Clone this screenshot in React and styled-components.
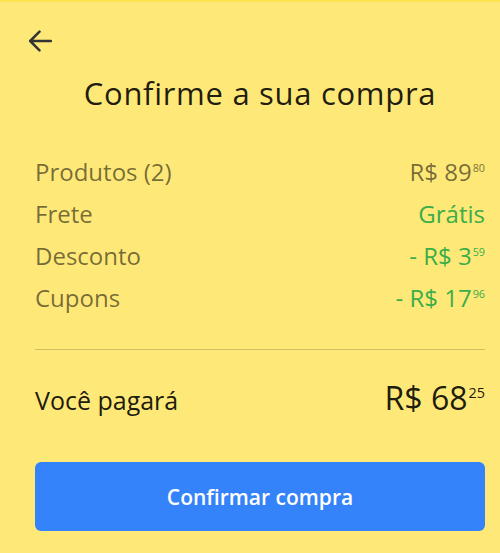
import React from "react";
import styled, { createGlobalStyle } from "styled-components";

const GlobalStyle = createGlobalStyle`
  html, body {
    margin: 0;
    padding: 0;
    background: #fee877;
  }
  body {
    font-family: "Open Sans", "Noto Sans", sans-serif;
  }
`;

const Page = styled.div`
  width: 500px;
  height: 553px;
  box-sizing: border-box;
  background: #fee877;
  border-top: 2px solid #fde24f;
  padding: 0 15px 0 35px;
  display: flex;
  flex-direction: column;
`;

const TopBar = styled.div`
  height: 73px;
  box-sizing: border-box;
  padding-top: 27px;
  margin-left: -7px;
  display: flex;
  align-items: flex-start;
`;

const BackButton = styled.button`
  background: none;
  border: none;
  padding: 0;
  width: 24px;
  height: 24px;
  display: flex;
  cursor: pointer;
`;

const Title = styled.h1`
  margin: 0;
  text-align: center;
  font-size: 31px;
  font-weight: 400;
  color: rgba(0, 0, 0, 0.88);
  letter-spacing: 0.7px;
  line-height: 36px;
`;

const Summary = styled.div`
  margin-top: 45px;
  display: flex;
  flex-direction: column;
  gap: 10px;
`;

const Row = styled.div`
  display: flex;
  justify-content: space-between;
  align-items: baseline;
  line-height: ${(p) => (p.$strong ? "36px" : "32px")};
  font-size: ${(p) => (p.$strong ? "25px" : "24px")};
  color: ${(p) => (p.$strong ? "rgba(0, 0, 0, 0.9)" : "rgba(0, 0, 0, 0.55)")};
`;

const Value = styled.span`
  color: ${(p) => (p.$green ? "#3aae48" : "inherit")};
  font-size: ${(p) => (p.$big ? "32px" : "24px")};
`;

const Cents = styled.sup`
  font-size: 0.45em;
  line-height: 0;
  vertical-align: 0.85em;
  margin-left: 1px;
`;

const Divider = styled.hr`
  border: none;
  border-top: 1px solid rgba(0, 0, 0, 0.18);
  margin: 35px 0 0;
`;

const Total = styled(Row)`
  margin-top: 30px;
`;

const ConfirmButton = styled.button`
  margin-top: 44px;
  height: 69px;
  border: none;
  border-radius: 6px;
  background: #3483fa;
  color: #fff;
  font-family: inherit;
  font-size: 21px;
  font-weight: 600;
  cursor: pointer;
`;

const Price = ({ int, cents, green, big, minus }) => (
  <Value $green={green} $big={big}>
    {minus ? "- " : ""}R$ {int}
    <Cents>{cents}</Cents>
  </Value>
);

export default function App() {
  return (
    <>
      <GlobalStyle />
      <Page>
        <TopBar>
          <BackButton aria-label="Voltar">
            <svg width="24" height="24" viewBox="0 0 24 24" fill="none" stroke="#333" strokeWidth="2.5" strokeLinecap="round" strokeLinejoin="round">
              <path d="M23 12H2.2M11.5 2.7 2.2 12l9.3 9.3" />
            </svg>
          </BackButton>
        </TopBar>
        <Title>Confirme a sua compra</Title>
        <Summary>
          <Row>
            <span>Produtos (2)</span>
            <Price int="89" cents="80" />
          </Row>
          <Row>
            <span>Frete</span>
            <Value $green>Grátis</Value>
          </Row>
          <Row>
            <span>Desconto</span>
            <Price int="3" cents="59" green minus />
          </Row>
          <Row>
            <span>Cupons</span>
            <Price int="17" cents="96" green minus />
          </Row>
        </Summary>
        <Divider />
        <Total $strong>
          <span>Você pagará</span>
          <Price int="68" cents="25" big />
        </Total>
        <ConfirmButton>Confirmar compra</ConfirmButton>
      </Page>
    </>
  );
}
